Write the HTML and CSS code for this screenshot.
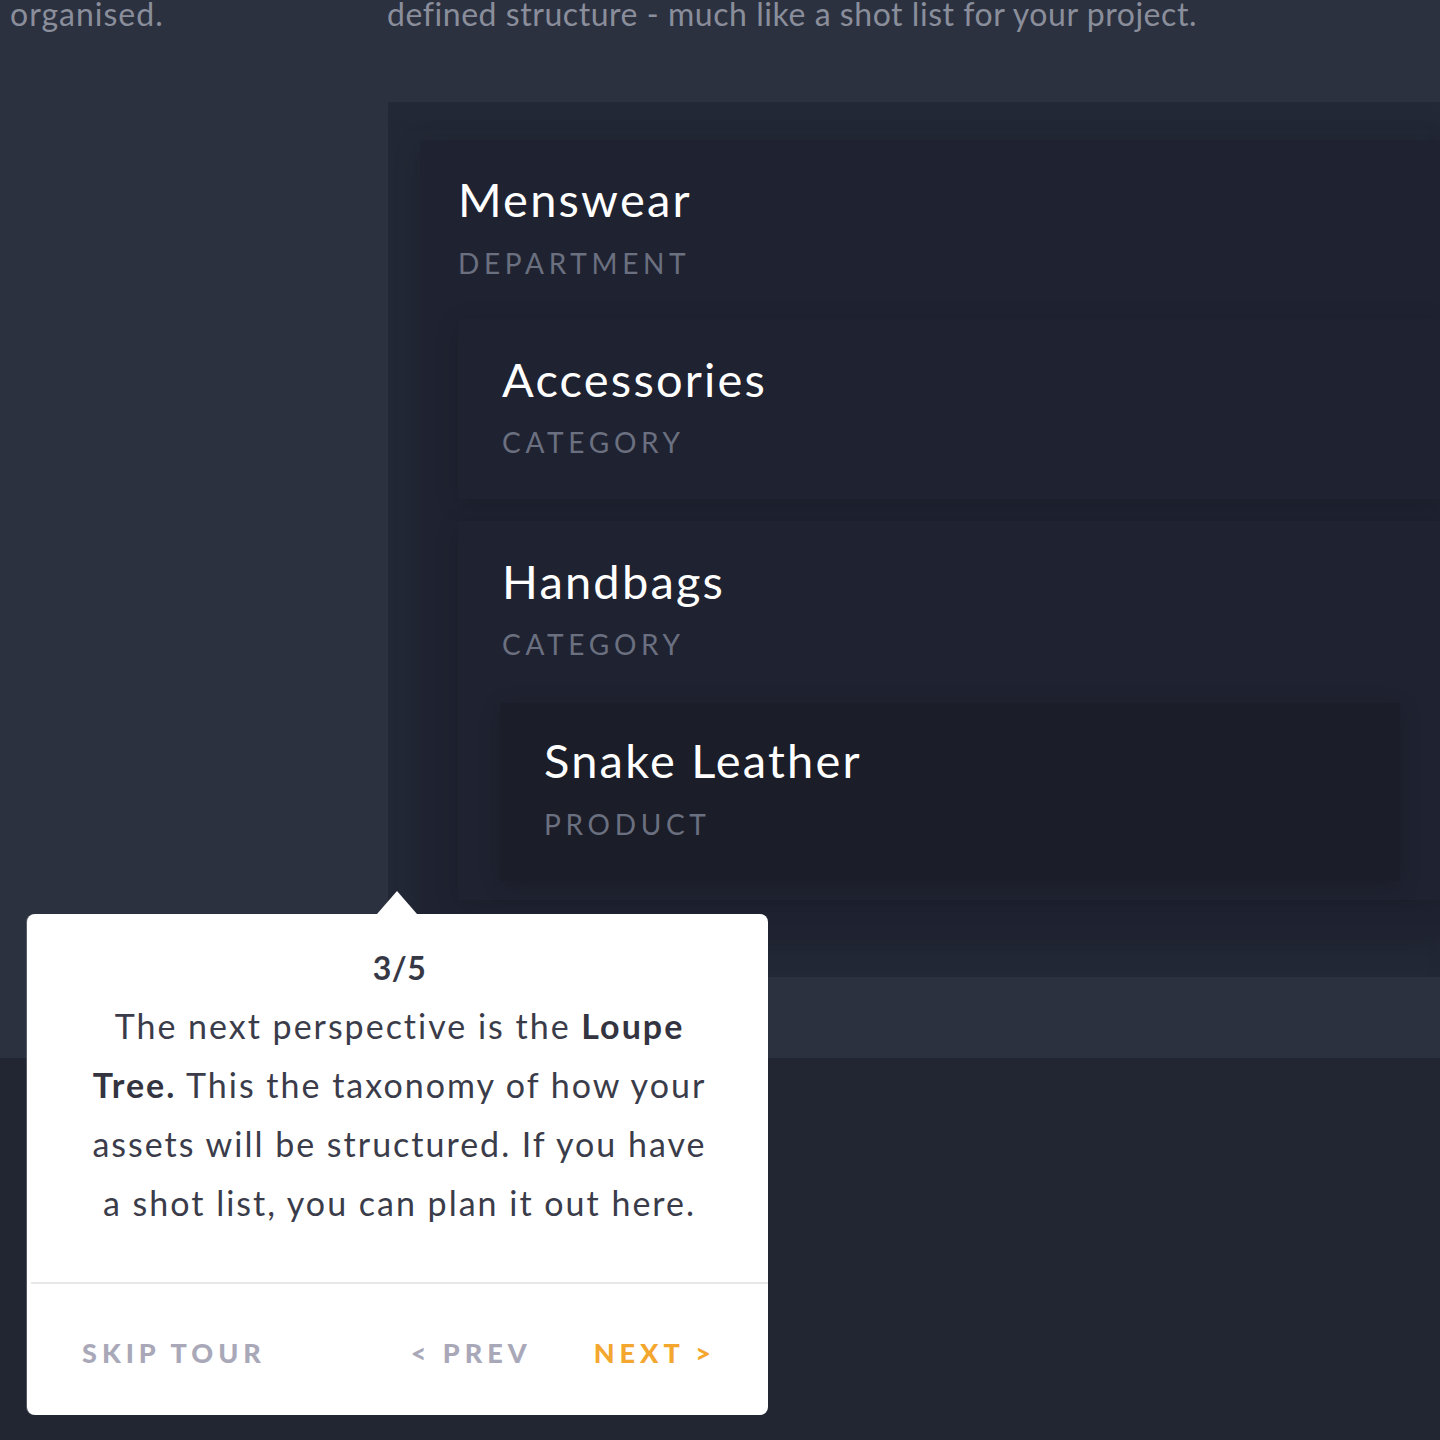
FILE: index.html
```html
<!DOCTYPE html>
<html lang="en">
<head>
<meta charset="utf-8">
<title>Loupe Tree tour</title>
<link rel="stylesheet" href="styles.css">
</head>
<body>
<div class="stage">
  <section class="top">
    <div class="left-col">
      <p class="intro">organised.</p>
    </div>
    <div class="right-col">
      <p class="intro">defined structure - much like a shot list for your project.</p>
      <div class="tree">
        <div class="node dept">
          <h2 class="node-title">Menswear</h2>
          <div class="node-type">DEPARTMENT</div>
          <div class="children">
            <div class="node cat">
              <h3 class="node-title">Accessories</h3>
              <div class="node-type">CATEGORY</div>
            </div>
            <div class="node cat bags">
              <h3 class="node-title">Handbags</h3>
              <div class="node-type">CATEGORY</div>
              <div class="node prod">
                <h4 class="node-title">Snake Leather</h4>
                <div class="node-type">PRODUCT</div>
              </div>
            </div>
          </div>
        </div>
      </div>
    </div>
  </section>
  <section class="bottom"></section>

  <div class="tour">
    <div class="tour-body">
      <div class="tour-step">3/5</div>
      <p class="tour-text">The next perspective is the <b>Loupe Tree.</b> This the taxonomy of how your assets will be structured. If you have a shot list, you can plan it out here.</p>
    </div>
    <div class="tour-foot">
      <span class="btn skip">SKIP TOUR</span>
      <span class="btn prev">&lt; PREV</span>
      <span class="btn next">NEXT &gt;</span>
    </div>
  </div>
</div>
</body>
</html>
```
FILE: styles.css
```css
* { box-sizing: border-box; }
html, body { margin: 0; padding: 0; }
body {
  background: #222532;
  font-family: "Lato", "Noto Sans", sans-serif;
  overflow: hidden;
  width: 1440px;
  height: 1440px;
}
.stage { position: relative; width: 1440px; height: 1440px; }

.top {
  display: flex;
  background: #2c3140;
  height: 1058px;
}
.left-col { width: 388px; flex: none; padding-left: 10px; }
.right-col { flex: 1; min-width: 0; }

.intro {
  margin: -6px 0 0;
  font-size: 32px;
  line-height: 40px;
  letter-spacing: 0.55px;
  color: #8a8e9b;
  white-space: nowrap;
}
.left-col .intro { letter-spacing: 1px; }
.right-col .intro { margin-left: -1px; }

.tree {
  margin-top: 68px;
  height: 875px;
  background: #232836;
  padding: 38px 0 0 32px;
  box-shadow: inset 0 18px 24px -18px rgba(40, 45, 60, 0.6);
}

.node { position: relative; }
.dept {
  background: #1f2331;
  padding: 31px 0 38px 38px;
  box-shadow: 0 6px 26px rgba(0, 0, 0, 0.16);
}
.cat {
  background: #1f2230;
  padding: 32px 0 41px 44px;
  box-shadow: 0 4px 22px rgba(0, 0, 0, 0.16);
}
.cat .node-type { margin-top: 19px; }
.cat.bags { margin-top: 22px; padding-bottom: 19px; }
.children { margin-top: 40px; }
.prod {
  width: 900px;
  margin: 43px 0 0 -2px;
  background: #1b1d28;
  padding: 29px 0 41px 44px;
  box-shadow: 0 4px 20px rgba(0, 0, 0, 0.18);
}
.prod .node-type { margin-top: 20px; }

.node-title {
  margin: 0;
  font-weight: 400;
  font-size: 47px;
  line-height: 56px;
  letter-spacing: 2.2px;
  color: #ffffff;
}
.node-type {
  margin-top: 20px;
  font-size: 28px;
  line-height: 32px;
  letter-spacing: 4.7px;
  color: #6b7080;
}

.bottom { height: 382px; }

/* Tour popover */
.tour {
  position: absolute;
  left: 27px;
  top: 914px;
  width: 741px;
  height: 501px;
  background: #ffffff;
  border-radius: 8px;
  display: flex;
  flex-direction: column;
  box-shadow: -1px 0 0 rgba(120, 124, 138, 0.6);
}
.tour::before {
  content: "";
  position: absolute;
  left: 350px;
  top: -23px;
  border-left: 20px solid transparent;
  border-right: 20px solid transparent;
  border-bottom: 23px solid #ffffff;
}
.tour-body {
  flex: 1;
  padding: 34px 0 0;
  text-align: center;
  border-bottom: 2px solid #e8e8eb;
  margin-left: 4px;
}
.tour-step {
  font-weight: 700;
  font-size: 32px;
  line-height: 40px;
  color: #373845;
  letter-spacing: 0.5px;
}
.tour-text {
  width: 626px;
  margin: 8px auto 0;
  font-size: 34px;
  line-height: 59px;
  letter-spacing: 2px;
  color: #3b3c4a;
}
.tour-text b { font-weight: 700; color: #33343f; }

.tour-foot {
  height: 131px;
  display: flex;
  align-items: center;
  padding: 6px 52px 0 55px;
  font-weight: 900;
  font-size: 27px;
  letter-spacing: 5px;
}
.btn { white-space: nowrap; }
.skip { color: #a9a8b8; }
.prev { color: #a9a8b8; margin-left: auto; }
.next { color: #f4a72e; margin-left: 62px; }
```
